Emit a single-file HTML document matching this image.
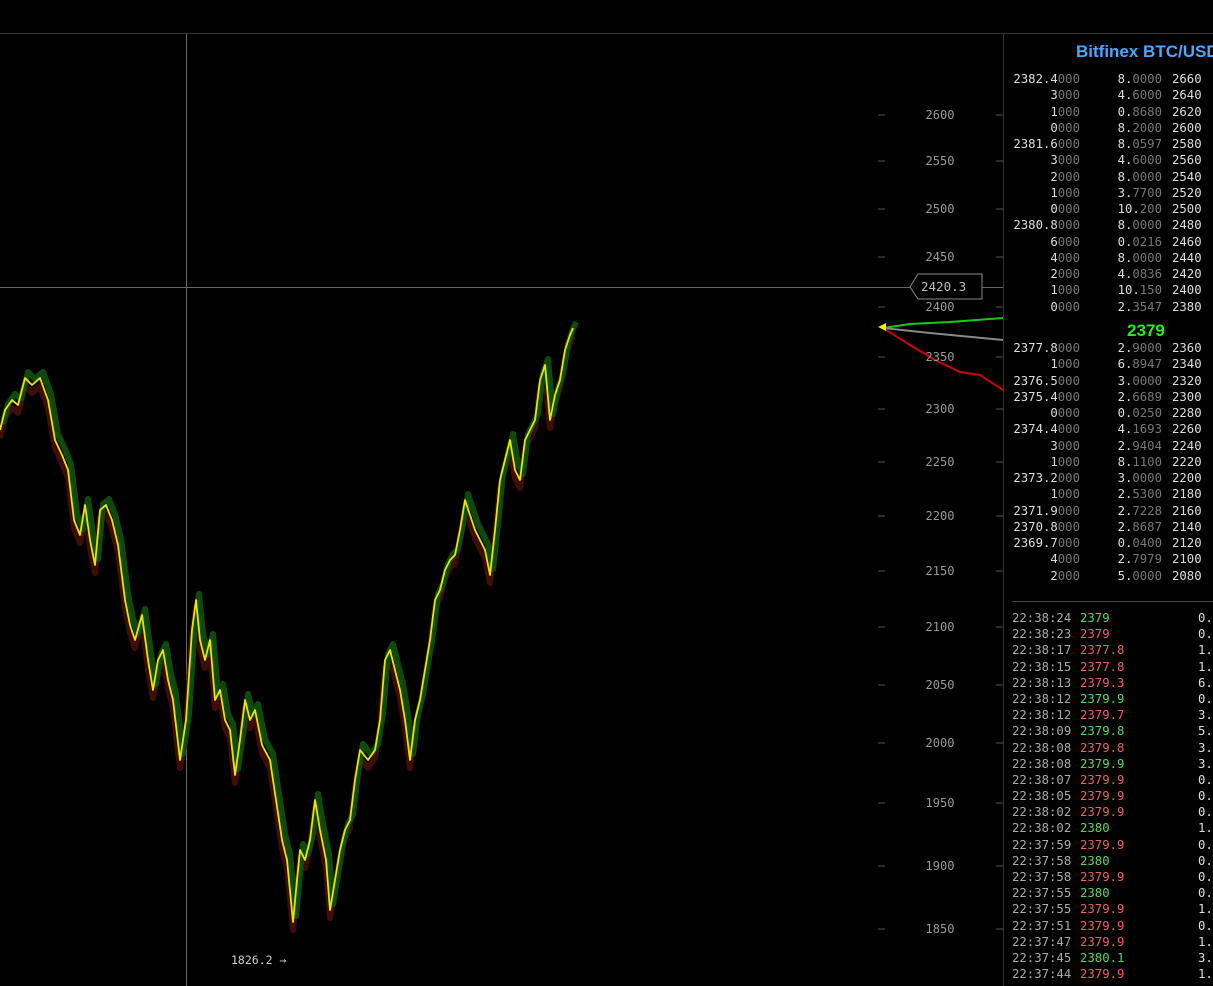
<!DOCTYPE html>
<html><head><meta charset="utf-8"><style>
body{margin:0;width:1213px;height:986px;background:#000;overflow:hidden;position:relative;font-family:"DejaVu Sans Mono","Liberation Mono",monospace;font-size:12.3px}
.a{position:absolute}
.ax{position:absolute;left:900px;width:80px;text-align:center;color:#999;font-size:12px}
.row{height:16.25px;line-height:16.25px;position:relative;white-space:pre}
.p{position:absolute;right:133px;color:#ddd}
.m{position:absolute;right:51px;color:#ddd}
.t{position:absolute;left:169px;color:#ddd}
.d{color:#777}
.tr{height:16.2px;line-height:16.2px;position:relative;white-space:pre}
.tm{position:absolute;left:9px;color:#aaa}
.tp{position:absolute;left:77px}
.ta{position:absolute;left:195px;color:#ddd}
.g{color:#5fd35f}.r{color:#e0665d}
</style></head><body>
<div class="a" style="left:0;top:33px;width:1213px;height:1px;background:#333"></div>
<div class="a" style="left:1003px;top:33px;width:1px;height:953px;background:#333"></div>
<div class="a" style="left:186px;top:34px;width:1px;height:952px;background:#666"></div>
<div class="a" style="left:0;top:287px;width:1003px;height:1px;background:#666"></div>

<svg class="a" style="left:0;top:0" width="1003" height="986">
<defs>
<polyline id="pl" points="0,430 5,410 12,400 18,405 25,378 32,385 40,378 48,400 55,440 62,455 68,470 74,520 80,535 85,505 90,540 95,565 100,510 106,505 112,520 118,545 125,600 130,625 135,640 142,615 148,660 153,690 158,660 163,650 168,680 173,700 180,760 186,720 192,630 196,600 200,640 205,660 210,640 215,700 220,690 225,720 230,730 235,775 240,740 245,700 250,720 255,710 262,745 270,760 276,800 282,840 287,860 293,922 297,880 300,850 305,860 310,840 315,800 320,830 326,860 330,910 335,880 340,850 345,830 350,820 355,780 360,750 368,760 375,750 380,720 385,660 390,650 395,670 400,690 405,720 410,760 415,720 420,700 425,670 430,640 435,600 440,590 445,570 450,560 455,555 460,530 465,500 470,515 475,530 480,540 485,550 490,575 495,530 500,480 505,460 510,440 515,470 520,480 525,440 530,430 535,420 540,380 545,365 550,420 555,395 560,380 565,350 570,335 573,328"/>
</defs>
<g stroke="#555" stroke-width="1">
<line x1="878" y1="115" x2="885" y2="115"/><line x1="996" y1="115" x2="1003" y2="115"/>
<line x1="878" y1="161" x2="885" y2="161"/><line x1="996" y1="161" x2="1003" y2="161"/>
<line x1="878" y1="209" x2="885" y2="209"/><line x1="996" y1="209" x2="1003" y2="209"/>
<line x1="878" y1="257" x2="885" y2="257"/><line x1="996" y1="257" x2="1003" y2="257"/>
<line x1="878" y1="307" x2="885" y2="307"/><line x1="996" y1="307" x2="1003" y2="307"/>
<line x1="878" y1="357" x2="885" y2="357"/><line x1="996" y1="357" x2="1003" y2="357"/>
<line x1="878" y1="409" x2="885" y2="409"/><line x1="996" y1="409" x2="1003" y2="409"/>
<line x1="878" y1="462" x2="885" y2="462"/><line x1="996" y1="462" x2="1003" y2="462"/>
<line x1="878" y1="516" x2="885" y2="516"/><line x1="996" y1="516" x2="1003" y2="516"/>
<line x1="878" y1="571" x2="885" y2="571"/><line x1="996" y1="571" x2="1003" y2="571"/>
<line x1="878" y1="627" x2="885" y2="627"/><line x1="996" y1="627" x2="1003" y2="627"/>
<line x1="878" y1="685" x2="885" y2="685"/><line x1="996" y1="685" x2="1003" y2="685"/>
<line x1="878" y1="743" x2="885" y2="743"/><line x1="996" y1="743" x2="1003" y2="743"/>
<line x1="878" y1="803" x2="885" y2="803"/><line x1="996" y1="803" x2="1003" y2="803"/>
<line x1="878" y1="866" x2="885" y2="866"/><line x1="996" y1="866" x2="1003" y2="866"/>
<line x1="878" y1="929" x2="885" y2="929"/><line x1="996" y1="929" x2="1003" y2="929"/>
</g>
<g fill="none" stroke-linejoin="round">
<use href="#pl" transform="translate(0,8)" stroke="#3f0c06" stroke-width="6"/>
<use href="#pl" transform="translate(3,-6)" stroke="#0f4a0c" stroke-width="6"/>
<use href="#pl" stroke="#e6e600" stroke-width="1.8"/>
</g>
<polyline points="883,328 910,324 950,322 1003,318" fill="none" stroke="#1c1" stroke-width="2"/>
<polyline points="883,328 930,333 1003,340" fill="none" stroke="#888" stroke-width="2"/>
<polyline points="883,328 910,345 935,360 960,372 980,375 1003,390" fill="none" stroke="#c00" stroke-width="2"/>
<polygon points="878,327 886,323 886,331" fill="#ee0"/>
<polygon points="910,287 918,274 982,274 982,299 918,299" fill="#000" stroke="#888"/>
</svg>
<div class="a" style="left:921px;top:279px;color:#bbb;font-size:12.5px">2420.3</div>
<div class="a" style="left:231px;top:953px;color:#ccc;font-size:11.5px">1826.2 →</div>

<div class="ax" style="top:108px">2600</div><div class="ax" style="top:154px">2550</div>
<div class="ax" style="top:202px">2500</div><div class="ax" style="top:250px">2450</div>
<div class="ax" style="top:300px">2400</div><div class="ax" style="top:350px">2350</div>
<div class="ax" style="top:402px">2300</div><div class="ax" style="top:455px">2250</div>
<div class="ax" style="top:509px">2200</div><div class="ax" style="top:564px">2150</div>
<div class="ax" style="top:620px">2100</div><div class="ax" style="top:678px">2050</div>
<div class="ax" style="top:736px">2000</div><div class="ax" style="top:796px">1950</div>
<div class="ax" style="top:859px">1900</div><div class="ax" style="top:922px">1850</div>

<div class="a" style="left:1076px;top:42px;color:#4da6ff;font-family:'Liberation Sans',sans-serif;font-weight:bold;font-size:17px;white-space:nowrap">Bitfinex BTC/USD</div>

<div class="a" style="left:1003px;top:71px;width:210px">
<div class="row"><span class="p">2382.4<span class="d">000</span></span><span class="m">8.<span class="d">0000</span></span><span class="t">2660</span></div>
<div class="row"><span class="p">3<span class="d">000</span></span><span class="m">4.<span class="d">6000</span></span><span class="t">2640</span></div>
<div class="row"><span class="p">1<span class="d">000</span></span><span class="m">0.<span class="d">8680</span></span><span class="t">2620</span></div>
<div class="row"><span class="p">0<span class="d">000</span></span><span class="m">8.<span class="d">2000</span></span><span class="t">2600</span></div>
<div class="row"><span class="p">2381.6<span class="d">000</span></span><span class="m">8.<span class="d">0597</span></span><span class="t">2580</span></div>
<div class="row"><span class="p">3<span class="d">000</span></span><span class="m">4.<span class="d">6000</span></span><span class="t">2560</span></div>
<div class="row"><span class="p">2<span class="d">000</span></span><span class="m">8.<span class="d">0000</span></span><span class="t">2540</span></div>
<div class="row"><span class="p">1<span class="d">000</span></span><span class="m">3.<span class="d">7700</span></span><span class="t">2520</span></div>
<div class="row"><span class="p">0<span class="d">000</span></span><span class="m">10.<span class="d">200</span></span><span class="t">2500</span></div>
<div class="row"><span class="p">2380.8<span class="d">000</span></span><span class="m">8.<span class="d">0000</span></span><span class="t">2480</span></div>
<div class="row"><span class="p">6<span class="d">000</span></span><span class="m">0.<span class="d">0216</span></span><span class="t">2460</span></div>
<div class="row"><span class="p">4<span class="d">000</span></span><span class="m">8.<span class="d">0000</span></span><span class="t">2440</span></div>
<div class="row"><span class="p">2<span class="d">000</span></span><span class="m">4.<span class="d">0836</span></span><span class="t">2420</span></div>
<div class="row"><span class="p">1<span class="d">000</span></span><span class="m">10.<span class="d">150</span></span><span class="t">2400</span></div>
<div class="row"><span class="p">0<span class="d">000</span></span><span class="m">2.<span class="d">3547</span></span><span class="t">2380</span></div>
</div>
<div class="a" style="left:1127px;top:321px;color:#22ee22;font-family:'Liberation Sans',sans-serif;font-weight:bold;font-size:17px">2379</div>
<div class="a" style="left:1003px;top:340px;width:210px">
<div class="row"><span class="p">2377.8<span class="d">000</span></span><span class="m">2.<span class="d">9000</span></span><span class="t">2360</span></div>
<div class="row"><span class="p">1<span class="d">000</span></span><span class="m">6.<span class="d">8947</span></span><span class="t">2340</span></div>
<div class="row"><span class="p">2376.5<span class="d">000</span></span><span class="m">3.<span class="d">0000</span></span><span class="t">2320</span></div>
<div class="row"><span class="p">2375.4<span class="d">000</span></span><span class="m">2.<span class="d">6689</span></span><span class="t">2300</span></div>
<div class="row"><span class="p">0<span class="d">000</span></span><span class="m">0.<span class="d">0250</span></span><span class="t">2280</span></div>
<div class="row"><span class="p">2374.4<span class="d">000</span></span><span class="m">4.<span class="d">1693</span></span><span class="t">2260</span></div>
<div class="row"><span class="p">3<span class="d">000</span></span><span class="m">2.<span class="d">9404</span></span><span class="t">2240</span></div>
<div class="row"><span class="p">1<span class="d">000</span></span><span class="m">8.<span class="d">1100</span></span><span class="t">2220</span></div>
<div class="row"><span class="p">2373.2<span class="d">000</span></span><span class="m">3.<span class="d">0000</span></span><span class="t">2200</span></div>
<div class="row"><span class="p">1<span class="d">000</span></span><span class="m">2.<span class="d">5300</span></span><span class="t">2180</span></div>
<div class="row"><span class="p">2371.9<span class="d">000</span></span><span class="m">2.<span class="d">7228</span></span><span class="t">2160</span></div>
<div class="row"><span class="p">2370.8<span class="d">000</span></span><span class="m">2.<span class="d">8687</span></span><span class="t">2140</span></div>
<div class="row"><span class="p">2369.7<span class="d">000</span></span><span class="m">0.<span class="d">0400</span></span><span class="t">2120</span></div>
<div class="row"><span class="p">4<span class="d">000</span></span><span class="m">2.<span class="d">7979</span></span><span class="t">2100</span></div>
<div class="row"><span class="p">2<span class="d">000</span></span><span class="m">5.<span class="d">0000</span></span><span class="t">2080</span></div>
</div>
<div class="a" style="left:1012px;top:601px;width:201px;height:1px;background:#444"></div>

<div class="a" style="left:1003px;top:610px;width:210px">
<div class="tr"><span class="tm">22:38:24</span><span class="tp g">2379</span><span class="ta">0.</span></div>
<div class="tr"><span class="tm">22:38:23</span><span class="tp r">2379</span><span class="ta">0.</span></div>
<div class="tr"><span class="tm">22:38:17</span><span class="tp r">2377.8</span><span class="ta">1.</span></div>
<div class="tr"><span class="tm">22:38:15</span><span class="tp r">2377.8</span><span class="ta">1.</span></div>
<div class="tr"><span class="tm">22:38:13</span><span class="tp r">2379.3</span><span class="ta">6.</span></div>
<div class="tr"><span class="tm">22:38:12</span><span class="tp g">2379.9</span><span class="ta">0.</span></div>
<div class="tr"><span class="tm">22:38:12</span><span class="tp r">2379.7</span><span class="ta">3.</span></div>
<div class="tr"><span class="tm">22:38:09</span><span class="tp g">2379.8</span><span class="ta">5.</span></div>
<div class="tr"><span class="tm">22:38:08</span><span class="tp r">2379.8</span><span class="ta">3.</span></div>
<div class="tr"><span class="tm">22:38:08</span><span class="tp g">2379.9</span><span class="ta">3.</span></div>
<div class="tr"><span class="tm">22:38:07</span><span class="tp r">2379.9</span><span class="ta">0.</span></div>
<div class="tr"><span class="tm">22:38:05</span><span class="tp r">2379.9</span><span class="ta">0.</span></div>
<div class="tr"><span class="tm">22:38:02</span><span class="tp r">2379.9</span><span class="ta">0.</span></div>
<div class="tr"><span class="tm">22:38:02</span><span class="tp g">2380</span><span class="ta">1.</span></div>
<div class="tr"><span class="tm">22:37:59</span><span class="tp r">2379.9</span><span class="ta">0.</span></div>
<div class="tr"><span class="tm">22:37:58</span><span class="tp g">2380</span><span class="ta">0.</span></div>
<div class="tr"><span class="tm">22:37:58</span><span class="tp r">2379.9</span><span class="ta">0.</span></div>
<div class="tr"><span class="tm">22:37:55</span><span class="tp g">2380</span><span class="ta">0.</span></div>
<div class="tr"><span class="tm">22:37:55</span><span class="tp r">2379.9</span><span class="ta">1.</span></div>
<div class="tr"><span class="tm">22:37:51</span><span class="tp r">2379.9</span><span class="ta">0.</span></div>
<div class="tr"><span class="tm">22:37:47</span><span class="tp r">2379.9</span><span class="ta">1.</span></div>
<div class="tr"><span class="tm">22:37:45</span><span class="tp g">2380.1</span><span class="ta">3.</span></div>
<div class="tr"><span class="tm">22:37:44</span><span class="tp r">2379.9</span><span class="ta">1.</span></div>
</div>
</body></html>
